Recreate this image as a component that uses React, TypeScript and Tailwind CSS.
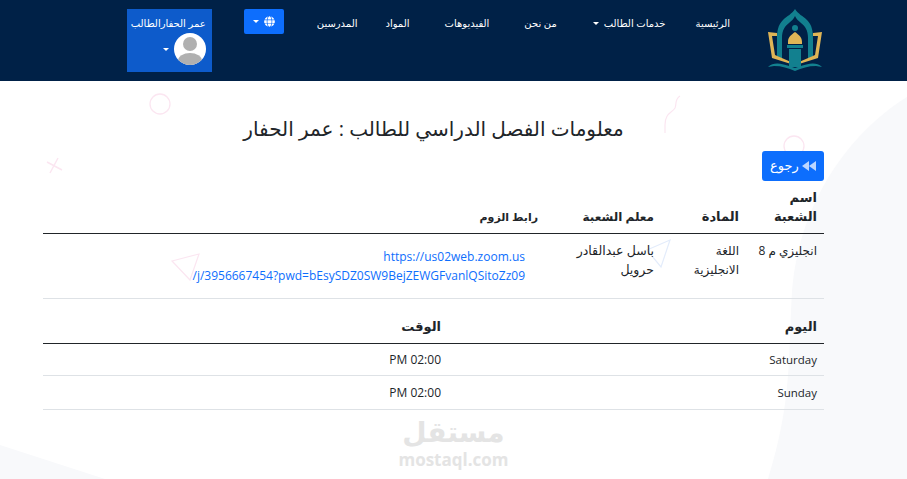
import { FaGlobe } from "react-icons/fa";

const font = { fontFamily: '"Open Sans", "Noto Sans", "DejaVu Sans", sans-serif' };

function Caret() {
  return <span className="inline-block border-x-[3px] border-t-[3px] border-x-transparent border-t-white" />;
}

function Logo() {
  return (
    <svg width="58" height="64" viewBox="0 0 58 64" className="block">
      <path d="M29 1 C32 6 37 8 41 12 C46 17 47 23 47 31 L47 48 L42 51 L42 30 C42 22 39 18 35 15 C33 13 30 11 29 8 C28 11 25 13 23 15 C19 18 16 22 16 30 L16 51 L11 48 L11 31 C11 23 12 17 17 12 C21 8 26 6 29 1 Z" fill="#12808f" />
      <path d="M2 24 L11 25 L11 28 L6 28 L9 47 L25 54 L25 56 L6 50 Z" fill="#dfb556" />
      <path d="M56 24 L47 25 L47 28 L52 28 L49 47 L33 54 L33 56 L52 50 Z" fill="#dfb556" />
      <path d="M2 59 C8 54 14 55 26 59 L29 60 L32 59 C44 55 50 54 56 59 L50 58 C42 58 36 60 29 63 C22 60 16 58 8 58 Z" fill="#12808f" />
      <circle cx="29" cy="20" r="3" fill="#12808f" />
      <path d="M29 24 C33 27 36 29 36 34 L36 36 L22 36 L22 34 C22 29 25 27 29 24 Z" fill="#dfb556" />
      <rect x="21" y="37" width="16" height="3" fill="#12808f" />
      <rect x="23" y="41" width="12" height="18" fill="#12808f" />
    </svg>
  );
}

function Avatar() {
  return (
    <svg width="32" height="32" viewBox="0 0 32 32" className="block">
      <clipPath id="av"><circle cx="16" cy="16" r="16" /></clipPath>
      <g clipPath="url(#av)">
        <rect width="32" height="32" fill="#ffffff" />
        <circle cx="16" cy="11" r="7" fill="#b0b0b0" />
        <ellipse cx="16" cy="28" rx="12" ry="8" fill="#b0b0b0" />
      </g>
    </svg>
  );
}

function Background() {
  return (
    <svg className="absolute inset-0 w-full h-full pointer-events-none" viewBox="0 0 907 398" fill="none">
      <path d="M907 16 C860 45 800 110 792 210 C788 280 792 320 768 398 L907 398 Z" fill="#f8f9fb" />
      <path d="M0 364 L105 398 L0 398 Z" fill="#f8f9fb" />
      <circle cx="160" cy="23" r="10" stroke="#fbe6f1" strokeWidth="1.3" />
      <circle cx="794" cy="65" r="10" stroke="#fbe6f1" strokeWidth="1.3" />
      <path d="M47 81 L62 89 M58 77 L50 92" stroke="#fbe6f1" strokeWidth="1.5" />
      <path d="M172 180 L199 173 L190 199 Z" stroke="#fbe6f1" strokeWidth="1.2" />
      <path d="M680 15 C674 19 677 23 675 27 C672 32 665 32 665 44 L665 52" stroke="#fbe6f1" strokeWidth="1.2" />
      <path d="M647 169 L670 159 L661 186 Z" stroke="#e3ecfb" strokeWidth="1.2" />
    </svg>
  );
}

export default function App() {
  return (
    <div dir="rtl" className="w-[907px] h-[479px] overflow-hidden bg-white text-[#212529]" style={font}>
      <header className="h-[81px] bg-[#002147] flex items-start pr-[83px] text-white text-[10px]">
        <div className="w-[58px] mt-[8px] ml-[36px]"><Logo /></div>
        <a className="mt-[15px] leading-[16px] ml-[30px]">الرئيسية</a>
        <a className="mt-[15px] leading-[16px] ml-[36px] flex items-center gap-[5px]">خدمات الطالب <Caret /></a>
        <a className="mt-[15px] leading-[16px] ml-[35px]">من نحن</a>
        <a className="mt-[15px] leading-[16px] ml-[35px]">الفيديوهات</a>
        <a className="mt-[15px] leading-[16px] ml-[28px]">المواد</a>
        <a className="mt-[15px] leading-[16px] ml-[33px]">المدرسين</a>
        <button className="mt-[9px] w-[40px] h-[25px] bg-[#0d6efd] rounded-[2px] flex items-center justify-center gap-[5px] ml-[32px]">
          <FaGlobe size={11} />
          <Caret />
        </button>
        <div className="mt-[9px] w-[85px] h-[63px] bg-[#0d5bcb] flex flex-col items-start pr-[6px]">
          <span className="leading-[16px] mt-[6px] whitespace-nowrap">عمر الحفارالطالب</span>
          <span className="flex items-center gap-[5px] mt-[2px]"><Avatar /><Caret /></span>
        </div>
      </header>
      <main className="relative h-[398px]">
        <Background />
        <div className="relative pr-[83px] pl-[43px]">
          <h1 className="text-center text-[20px] leading-[28px] font-medium pt-[34px]">معلومات الفصل الدراسي للطالب : عمر الحفار</h1>
          <div className="mt-[8px] flex">
            <a className="h-[30px] w-[62px] rounded-[3px] bg-[#0d6efd] text-white text-[13px] flex items-center justify-center gap-[3px]">
              <svg width="14" height="10" viewBox="0 0 14 10" fill="#bcd6ff"><path d="M7 0 L0 5 L7 10 Z" /><path d="M14 0 L7 5 L14 10 Z" /></svg>
              رجوع
            </a>
          </div>
          <table className="w-full text-[12px] leading-[19px] border-collapse">
            <thead className="font-bold">
              <tr className="border-b border-[#212529] align-bottom">
                <th className="text-right px-[7px] pt-[7px] pb-[7px] w-[78px] text-[13px]">اسم الشعبة</th>
                <th className="text-right px-[7px] pb-[7px] w-[85px] text-[13px]">المادة</th>
                <th className="text-right px-[7px] pb-[7px] w-[116px] text-[12px]">معلم الشعبة</th>
                <th className="text-right px-[7px] pb-[7px] text-[11px]">رابط الزوم</th>
              </tr>
            </thead>
            <tbody>
              <tr className="border-b border-[#dee2e6] align-top">
                <td className="px-[7px] pt-[7px] pb-[19px]">انجليزي م 8</td>
                <td className="px-[7px] pt-[7px] pb-[19px]">اللغة الانجليزية</td>
                <td className="px-[7px] pt-[7px] pb-[19px] text-[12.5px]">باسل عبدالقادر حرويل</td>
                <td className="pr-[20px] pl-[7px] pt-[13px] pb-[13px]">
                  <a className="text-[#0d6efd] block w-[345px] break-all" dir="ltr" style={{ textAlign: "right" }}>
                    https://us02web.zoom.us<br />/j/3956667454?pwd=bEsySDZ0SW9BejZEWGFvanlQSitoZz09
                  </a>
                </td>
              </tr>
            </tbody>
          </table>
          <table className="w-full text-[12px] leading-[19px] border-collapse mt-[12px]">
            <thead>
              <tr className="border-b border-[#212529]">
                <th className="text-right px-[7px] pt-[6px] pb-[7px] w-[376px] text-[13px]">اليوم</th>
                <th className="text-right px-[7px] pt-[6px] pb-[7px] text-[13px]">الوقت</th>
              </tr>
            </thead>
            <tbody>
              <tr className="border-b border-[#dee2e6]">
                <td className="px-[7px] py-[6px] text-[11.5px]">Saturday</td>
                <td className="px-[7px] py-[6px]">02:00 PM</td>
              </tr>
              <tr className="border-b border-[#dee2e6]">
                <td className="px-[7px] py-[7px] text-[11.5px]">Sunday</td>
                <td className="px-[7px] py-[7px]">02:00 PM</td>
              </tr>
            </tbody>
          </table>
        </div>
        <div className="absolute left-[399px] top-[332px] w-[109px] flex flex-col items-center text-[#e4e4e4]">
          <span className="text-[28px] leading-[36px] font-bold">مستقل</span>
          <span className="text-[17px] leading-[20px] font-bold mt-[1px]" dir="ltr">mostaql.com</span>
        </div>
      </main>
    </div>
  );
}
